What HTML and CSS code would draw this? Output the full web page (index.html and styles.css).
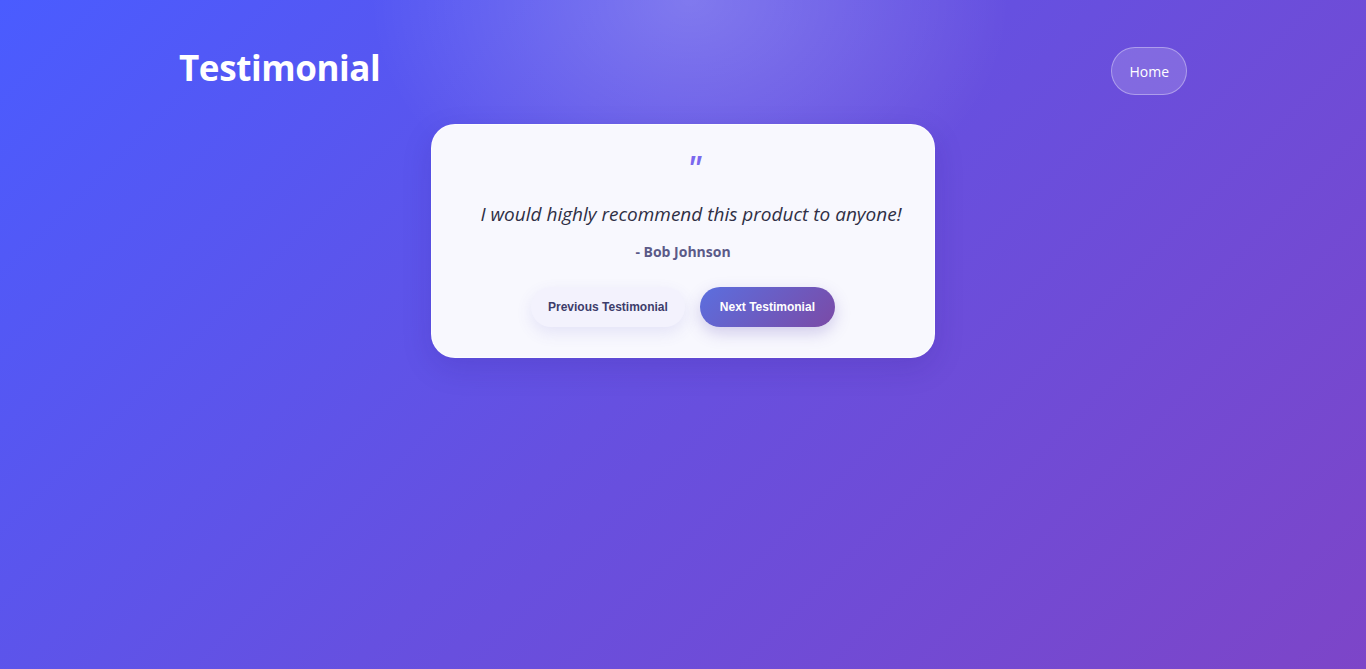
FILE: index.html
```html
<!DOCTYPE html>
<html lang="en">
<head>
    <meta charset="UTF-8">
    <meta name="viewport" content="width=device-width, initial-scale=1.0">
    <title>Testimonial</title>
    <link rel="stylesheet" href="styles.css">
</head>
<body>

    <div class="page">
        <header class="top">
            <h1>Testimonial</h1>
            <a class="home" href="#">Home</a>
        </header>

        <div class="card">
            <div class="mark">"</div>
            <p class="quote" id="quote">I would highly recommend this product to anyone!</p>
            <p class="author" id="author">- Bob Johnson</p>
            <div class="actions">
                <button class="btn prev" id="prev">Previous Testimonial</button>
                <button class="btn next" id="next">Next Testimonial</button>
            </div>
        </div>
    </div>

    <script>
        const items = [
            { text: "I would highly recommend this product to anyone!", name: "Bob Johnson" },
            { text: "Great service and a friendly team, thank you!", name: "Alice Smith" },
            { text: "It saved us hours every single week.", name: "Carlos Diaz" }
        ];
        let current = 0;

        function show() {
            document.getElementById("quote").textContent = items[current].text;
            document.getElementById("author").textContent = "- " + items[current].name;
        }

        document.getElementById("next").onclick = function() {
            current = (current + 1) % items.length;
            show();
        };
        document.getElementById("prev").onclick = function() {
            current = (current - 1 + items.length) % items.length;
            show();
        };
    </script>

</body>
</html>
```

FILE: styles.css
```css
* {
    box-sizing: border-box;
}
body {
    margin: 0;
    min-height: 100vh;
    font-family: "Open Sans", "Noto Sans", sans-serif;
    background:
        radial-gradient(ellipse 320px 240px at 690px 0px, rgba(255, 255, 255, 0.22), rgba(255, 255, 255, 0)),
        linear-gradient(135deg, #4a5cff 0%, #6650e0 50%, #7d45c8 100%);
}
.page {
    max-width: 1008px;
    margin: 0 auto;
    padding: 47px 0;
}
.top {
    display: flex;
    justify-content: space-between;
    align-items: center;
    height: 48px;
}
.top h1 {
    margin: 0 0 6px;
    color: white;
    font-size: 35px;
    line-height: 1.2;
    font-weight: 700;
    letter-spacing: -0.4px;
}
.home {
    display: flex;
    align-items: center;
    height: 48px;
    padding: 0 17px;
    border-radius: 24px;
    border: 1px solid rgba(255, 255, 255, 0.35);
    background: rgba(255, 255, 255, 0.16);
    color: white;
    font-size: 14px;
    text-decoration: none;
}
.card {
    width: 504px;
    margin: 29px auto 0;
    padding: 30px 20px;
    text-align: center;
    background: #f8f8fe;
    border: 1px solid rgba(255, 255, 255, 0.7);
    border-radius: 24px;
    box-shadow: 0 10px 30px rgba(40, 20, 120, 0.15);
}
.mark {
    height: 30px;
    padding-left: 22px;
    font-size: 34px;
    line-height: 0.8;
    font-style: italic;
    font-weight: 600;
    color: #7b68ee;
}
.quote {
    margin: 14px 0 0;
    padding-left: 16px;
    font-size: 19px;
    line-height: 30px;
    font-style: italic;
    white-space: nowrap;
    color: #2f2f45;
}
.author {
    margin: 13px 0 0;
    font-size: 14px;
    line-height: 20px;
    font-weight: 700;
    color: #5b5a88;
}
.actions {
    display: flex;
    justify-content: center;
    gap: 15px;
    margin-top: 25px;
}
.btn {
    height: 40px;
    border: none;
    border-radius: 20px;
    font-family: "Liberation Sans", Arial, sans-serif;
    font-size: 12px;
    font-weight: 700;
    cursor: pointer;
}
.prev {
    padding: 0 17px;
    background: #f3f2fd;
    color: #3d3d6b;
    box-shadow: 0 6px 16px rgba(90, 80, 200, 0.12);
}
.next {
    padding: 0 20px;
    background: linear-gradient(135deg, #5b6fdf, #7b4aa6);
    color: white;
    box-shadow: 0 6px 16px rgba(90, 70, 180, 0.25);
}
```
